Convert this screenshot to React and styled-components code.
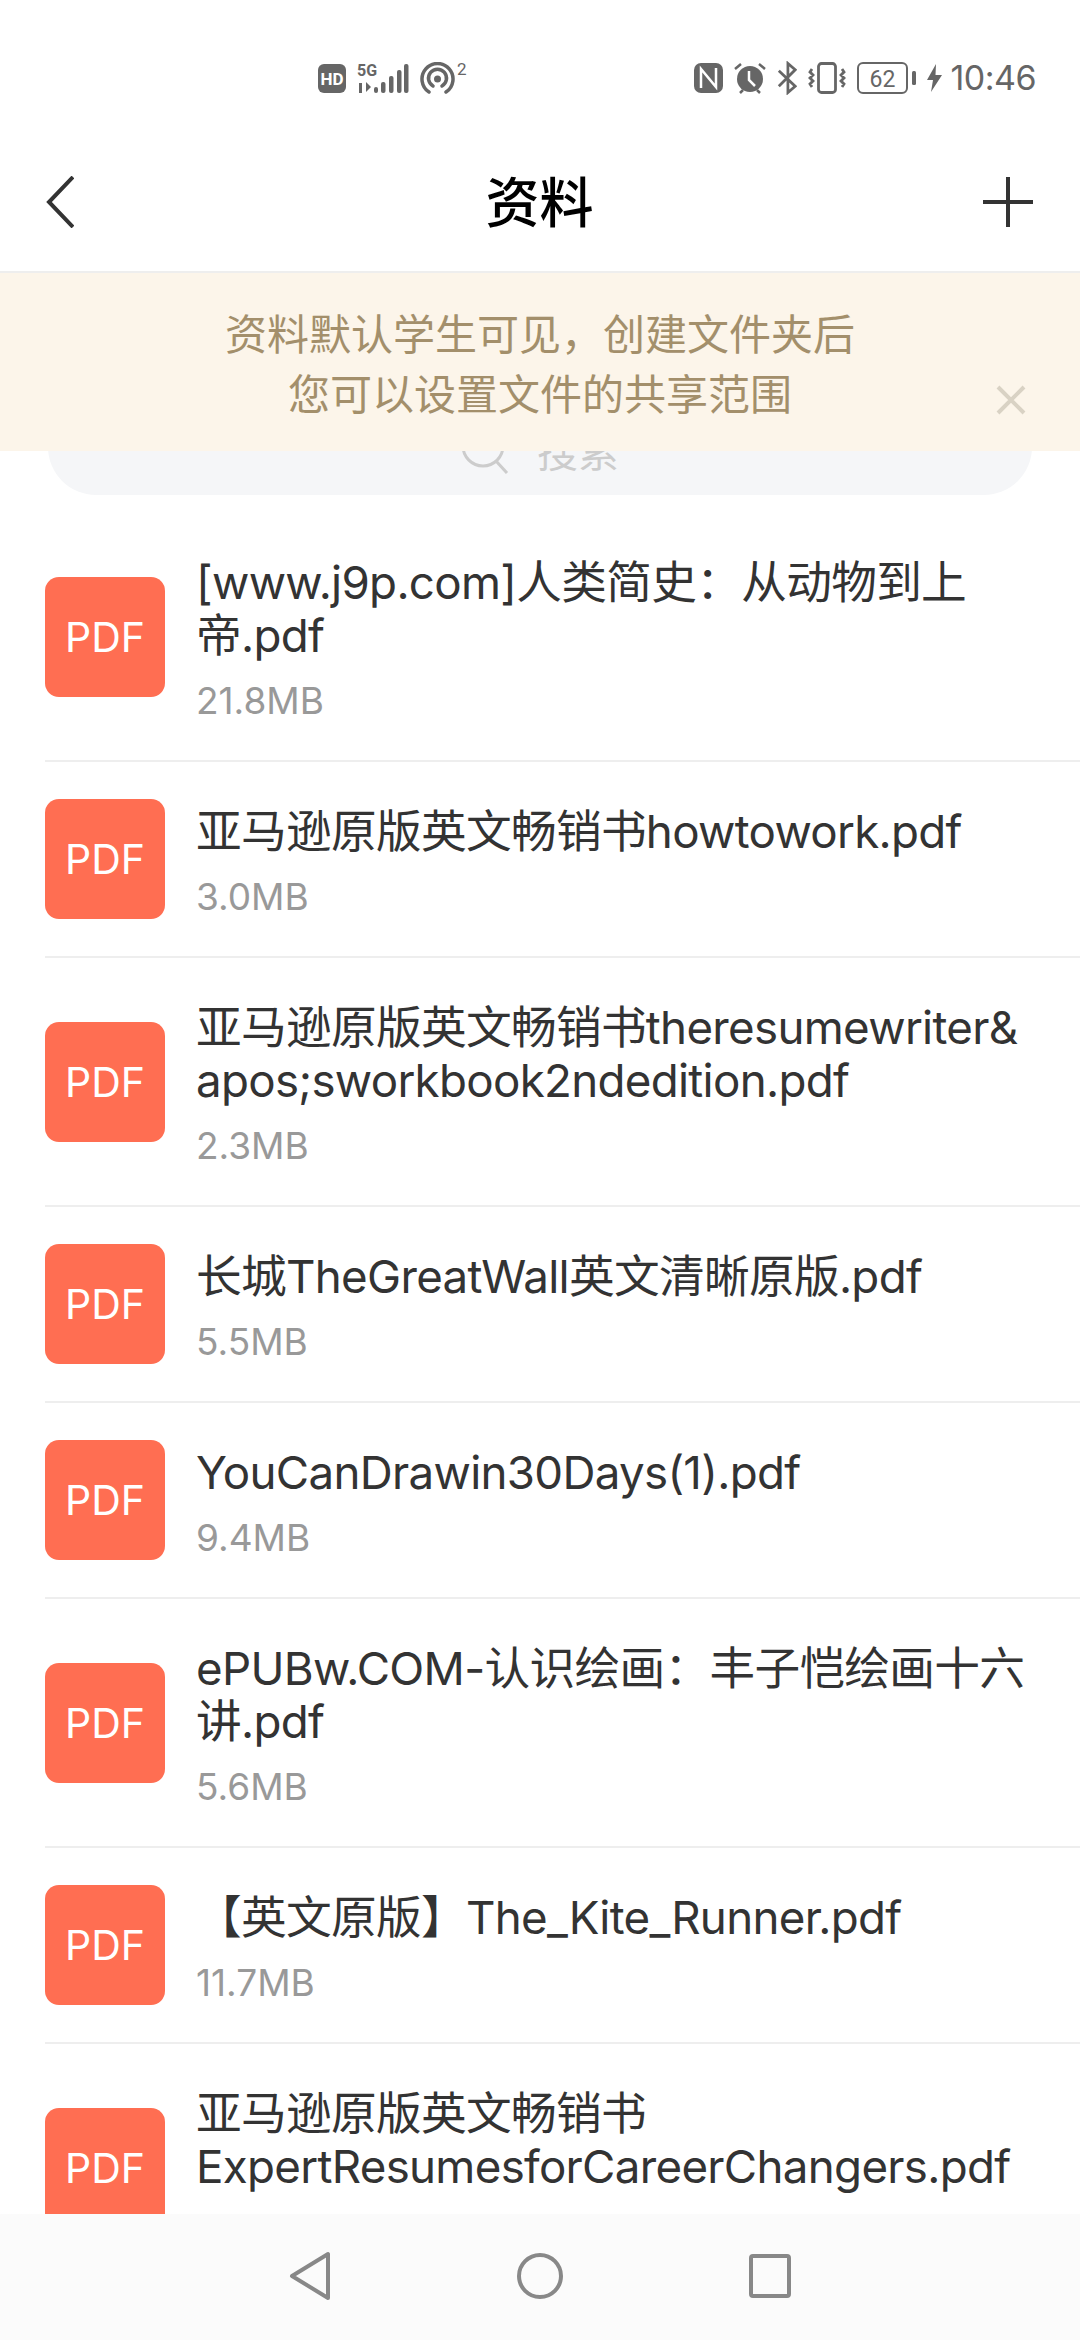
import styled, { createGlobalStyle } from "styled-components";

const GlobalStyle = createGlobalStyle`
  html, body {
    margin: 0;
    padding: 0;
    background: #fff;
  }
  * {
    box-sizing: border-box;
  }
`;

const files = [
  { name: "[www.j9p.com]人类简史：从动物到上\n帝.pdf", size: "21.8MB" },
  { name: "亚马逊原版英文畅销书howtowork.pdf", size: "3.0MB" },
  { name: "亚马逊原版英文畅销书theresumewriter&\napos;sworkbook2ndedition.pdf", size: "2.3MB" },
  { name: "长城TheGreatWall英文清晰原版.pdf", size: "5.5MB" },
  { name: "YouCanDrawin30Days(1).pdf", size: "9.4MB" },
  { name: "ePUBw.COM-认识绘画：丰子恺绘画十六\n讲.pdf", size: "5.6MB" },
  { name: "【英文原版】The_Kite_Runner.pdf", size: "11.7MB" },
  { name: "亚马逊原版英文畅销书\nExpertResumesforCareerChangers.pdf", size: "8.1MB" },
];

const Page = styled.div`
  position: relative;
  width: 1080px;
  height: 2340px;
  display: flex;
  flex-direction: column;
  overflow: hidden;
  background: #fff;
  font-family: Inter, "Noto Sans CJK SC", sans-serif;
`;

const StatusBar = styled.div`
  height: 133px;
  padding: 62px 44px 0 318px;
  display: flex;
  justify-content: space-between;
  align-items: flex-start;
  color: #666;
`;

const StatusGroup = styled.div`
  display: flex;
  align-items: center;
  height: 32px;
  gap: ${(props) => props.gap}px;
`;

const Time = styled.span`
  font-size: 34px;
  line-height: 32px;
  margin-left: -3px;
  letter-spacing: -0.5px;
  color: #666;
`;

const Toolbar = styled.div`
  height: 140px;
  padding: 0 47px 0 46px;
  display: flex;
  align-items: center;
  border-bottom: 2px solid #eeeeee;
`;

const ToolbarSide = styled.div`
  flex: 1;
  display: flex;
  justify-content: ${(props) => (props.end ? "flex-end" : "flex-start")};
`;

const PageTitle = styled.h1`
  margin: 4px 0 0;
  font-size: 54px;
  line-height: 60px;
  font-weight: 500;
  color: #000;
`;

const Banner = styled.div`
  position: absolute;
  top: 273px;
  left: 0;
  right: 0;
  height: 178px;
  padding-top: 32px;
  background: #fcf5ea;
  color: #a38f6b;
  font-size: 42px;
  line-height: 60px;
  text-align: center;
`;

const BannerClose = styled.svg`
  position: absolute;
  right: 54px;
  top: 112px;
`;

const SearchBar = styled.div`
  margin: 126px 48px 18px;
  height: 96px;
  border-radius: 48px;
  background: #f5f6f8;
  display: flex;
  align-items: center;
  justify-content: center;
  gap: 26px;
  color: #cccccc;
  font-size: 41px;
  padding-top: 4px;
`;

const List = styled.div`
  flex: 1;
  min-height: 0;
  overflow: hidden;
  padding-left: 45px;
`;

const Row = styled.div`
  display: flex;
  align-items: center;
  gap: 31px;
  padding: 37px 0;
  border-bottom: 2px solid #eeeeee;
`;

const PdfIcon = styled.div`
  flex: none;
  width: 120px;
  height: 120px;
  border-radius: 14px;
  background: #ff6e52;
  color: #fff;
  font-size: 41px;
  display: flex;
  align-items: center;
  justify-content: center;
`;

const FileInfo = styled.div`
  flex: 1;
  min-width: 0;
  padding-top: 6px;
`;

const FileName = styled.div`
  font-size: 45.7px;
  line-height: 53px;
  letter-spacing: -0.7px;
  color: #333;
  white-space: pre-line;
`;

const FileSize = styled.div`
  margin-top: 17px;
  font-size: 37px;
  line-height: 44px;
  color: #999;
`;

const NavBar = styled.div`
  flex: none;
  height: 126px;
  display: flex;
  align-items: center;
  justify-content: center;
  background: #fbfbfb;
`;

const NavButton = styled.div`
  width: 230px;
  padding-bottom: 2px;
  display: flex;
  justify-content: center;
`;

const HdIcon = () => (
  <svg width="28" height="29" viewBox="0 0 28 29">
    <rect width="28" height="29" rx="6" fill="#666" />
    <text x="14" y="20.500" textAnchor="middle" fontSize="17" fontWeight="700" fontFamily="Roboto, sans-serif" fill="#fff">HD</text>
  </svg>
);

const SignalIcon = () => (
  <svg width="52" height="32" viewBox="0 0 52 32" fill="#666">
    <text x="0" y="14" fontSize="16" fontWeight="700" fontFamily="Roboto, sans-serif">5G</text>
    <rect x="2" y="21" width="3" height="10" />
    <path d="M9 20l5 5-5 5z" />
    <rect x="17" y="25" width="4" height="6" rx="2" />
    <rect x="24" y="20" width="4.500" height="11" rx="2" />
    <rect x="32" y="14" width="4.500" height="17" rx="2" />
    <rect x="40" y="8" width="4.500" height="23" rx="2" />
    <rect x="47" y="2" width="4.500" height="29" rx="2" />
  </svg>
);

const HotspotIcon = () => (
  <svg width="48" height="32" viewBox="0 0 48 32" fill="none" stroke="#666">
    <path d="M9 30a15.500 15.500 0 1 1 17 0" strokeWidth="3.500" strokeLinecap="round" />
    <path d="M13 24a9 9 0 1 1 9 0" strokeWidth="3.500" strokeLinecap="round" />
    <circle cx="17.500" cy="17" r="3.500" fill="#666" stroke="none" />
    <text x="37" y="13" fontSize="17" fontFamily="Roboto, sans-serif" fill="#666" stroke="none">2</text>
  </svg>
);

const NfcIcon = () => (
  <svg width="29" height="30" viewBox="0 0 29 30">
    <rect width="29" height="30" rx="7" fill="#666" />
    <path d="M7 25V6l15 18V5" fill="none" stroke="#fff" strokeWidth="2.500" />
  </svg>
);

const AlarmIcon = () => (
  <svg width="32" height="32" viewBox="0 0 32 32">
    <circle cx="16" cy="17" r="13" fill="#666" />
    <path d="M1 7l6-5M31 7l-6-5M6 31l3-3M26 31l-3-3" stroke="#666" strokeWidth="2.500" />
    <path d="M15 9v9l6 6" fill="none" stroke="#fff" strokeWidth="2.500" />
  </svg>
);

const BluetoothIcon = () => (
  <svg width="20" height="34" viewBox="0 0 22 34" fill="none" stroke="#666" strokeWidth="3">
    <path d="M2 9l18 17-8 7V1l8 7L2 26" />
  </svg>
);

const VibrateIcon = () => (
  <svg width="38" height="32" viewBox="0 0 38 32" fill="none" stroke="#666" strokeWidth="2.800">
    <rect x="10.500" y="1.500" width="17" height="29" rx="3" />
    <path d="M4 7l-2 3 3 3-3 3 3 3-3 3 2 3M34 7l2 3-3 3 3 3-3 3 3 3-2 3" />
  </svg>
);

const BatteryIcon = () => (
  <svg width="59" height="32" viewBox="0 0 59 32">
    <rect x="1" y="1" width="49" height="30" rx="5" fill="none" stroke="#666" strokeWidth="2" />
    <text x="25.500" y="25" textAnchor="middle" fontSize="23" fontFamily="Roboto, sans-serif" fill="#666">62</text>
    <rect x="55" y="9" width="4" height="14" rx="1.500" fill="#666" />
  </svg>
);

const BoltIcon = () => (
  <svg width="15" height="28" viewBox="0 0 15 28" fill="#666">
    <path d="M9 0L0 16h6l-2 12 11-17H8.500z" />
  </svg>
);

const Chevron = () => (
  <svg width="28" height="52" viewBox="0 0 28 52" fill="none" stroke="#333" strokeWidth="4">
    <path d="M27 1L3 26l24 25" />
  </svg>
);

const Plus = () => (
  <svg width="50" height="50" viewBox="0 0 50 50" stroke="#333" strokeWidth="4">
    <path d="M25 0v50M0 25h50" />
  </svg>
);

const SearchIcon = () => (
  <svg width="50" height="50" viewBox="0 0 50 50" fill="none" stroke="#cccccc" strokeWidth="3">
    <circle cx="22" cy="22" r="20" />
    <path d="M35 37l11 12" />
  </svg>
);

export default function App() {
  return (
    <Page>
      <GlobalStyle />
      <StatusBar>
        <StatusGroup gap={11}>
          <HdIcon />
          <SignalIcon />
          <HotspotIcon />
        </StatusGroup>
        <StatusGroup gap={11}>
          <NfcIcon />
          <AlarmIcon />
          <BluetoothIcon />
          <VibrateIcon />
          <BatteryIcon />
          <BoltIcon />
          <Time>10:46</Time>
        </StatusGroup>
      </StatusBar>
      <Toolbar>
        <ToolbarSide>
          <Chevron />
        </ToolbarSide>
        <PageTitle>资料</PageTitle>
        <ToolbarSide end="true">
          <Plus />
        </ToolbarSide>
      </Toolbar>
      <Banner>
        资料默认学生可见，创建文件夹后
        <br />
        您可以设置文件的共享范围
        <BannerClose width="30" height="30" viewBox="0 0 30 30" stroke="#d9d2c4" strokeWidth="4">
          <path d="M2 2l26 26M28 2L2 28" />
        </BannerClose>
      </Banner>
      <SearchBar>
        <SearchIcon />
        <span>搜索</span>
      </SearchBar>
      <List>
        {files.map((file) => (
          <Row key={file.name}>
            <PdfIcon>PDF</PdfIcon>
            <FileInfo>
              <FileName>{file.name}</FileName>
              <FileSize>{file.size}</FileSize>
            </FileInfo>
          </Row>
        ))}
      </List>
      <NavBar>
        <NavButton>
          <svg width="42" height="50" viewBox="0 0 42 50" fill="none" stroke="#888" strokeWidth="4" strokeLinejoin="round">
            <path d="M39 3v44L3 25z" />
          </svg>
        </NavButton>
        <NavButton>
          <svg width="46" height="46" viewBox="0 0 46 46" fill="none" stroke="#888" strokeWidth="4">
            <circle cx="23" cy="23" r="21" />
          </svg>
        </NavButton>
        <NavButton>
          <svg width="42" height="44" viewBox="0 0 42 44" fill="none" stroke="#888" strokeWidth="4">
            <rect x="2" y="2" width="38" height="40" rx="2" />
          </svg>
        </NavButton>
      </NavBar>
    </Page>
  );
}
